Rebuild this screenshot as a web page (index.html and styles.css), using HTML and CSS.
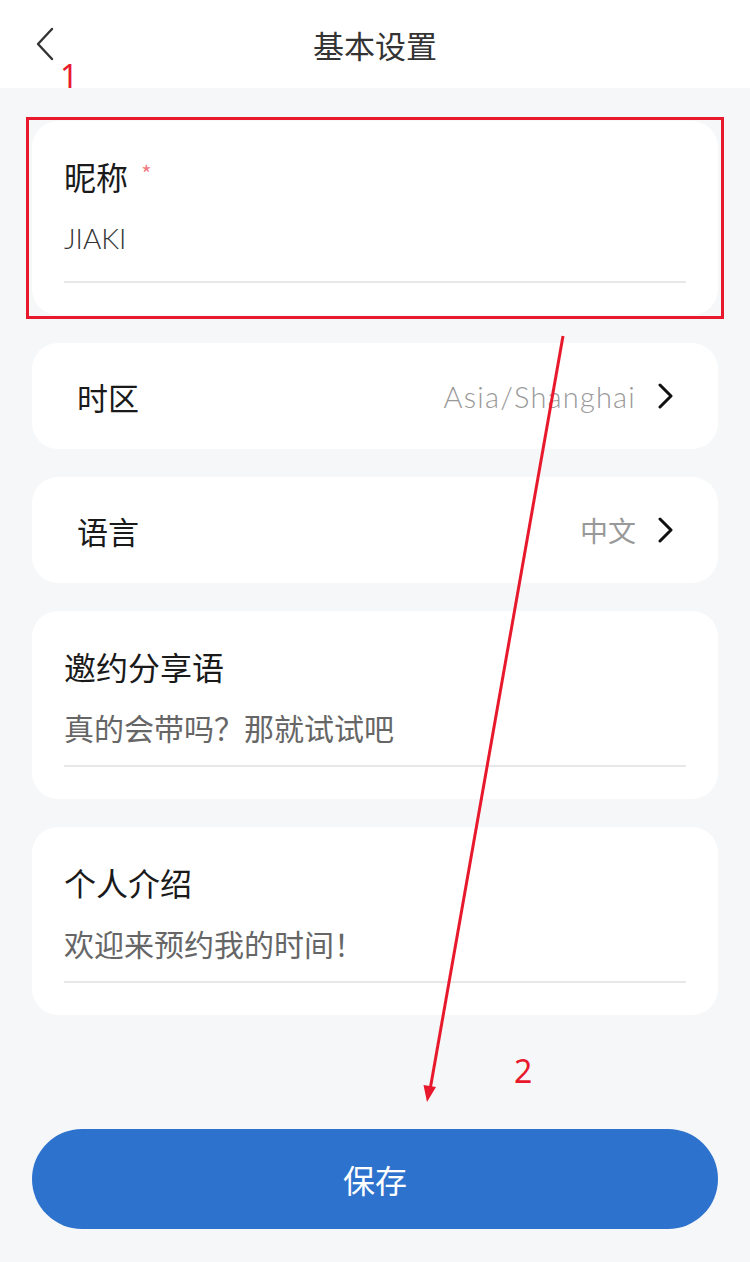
FILE: index.html
```html
<!DOCTYPE html>
<html lang="zh-CN">
<head>
  <meta charset="UTF-8">
  <meta name="viewport" content="width=device-width, initial-scale=1.0">
  <title>基本设置</title>
  <link rel="stylesheet" href="styles.css">
</head>
<body>

  <!-- Header -->
  <header class="header">
    <button class="back-button" aria-label="返回">
      <svg width="20" height="34" viewBox="0 0 20 34">
        <path d="M17 2 L3 17 L17 32" fill="none" stroke="#333" stroke-width="2.4" stroke-linecap="round" stroke-linejoin="round"/>
      </svg>
    </button>
    <h1 class="title">基本设置</h1>
  </header>

  <main class="settings">
    <!-- Nickname -->
    <div class="card field field-nickname">
      <div class="field-label">昵称 <span class="required">*</span></div>
      <div class="field-value dark">JIAKI</div>
    </div>

    <!-- Time zone -->
    <div class="card row">
      <div class="row-label">时区</div>
      <div class="row-right">
        <span class="row-value latin">Asia/Shanghai</span>
        <svg class="chevron" width="16" height="26" viewBox="0 0 16 26">
          <path d="M2 2 L13 13 L2 24" fill="none" stroke="#111" stroke-width="3" stroke-linecap="round" stroke-linejoin="round"/>
        </svg>
      </div>
    </div>

    <!-- Language -->
    <div class="card row">
      <div class="row-label">语言</div>
      <div class="row-right">
        <span class="row-value">中文</span>
        <svg class="chevron" width="16" height="26" viewBox="0 0 16 26">
          <path d="M2 2 L13 13 L2 24" fill="none" stroke="#111" stroke-width="3" stroke-linecap="round" stroke-linejoin="round"/>
        </svg>
      </div>
    </div>

    <!-- Invite text -->
    <div class="card field">
      <div class="field-label">邀约分享语</div>
      <div class="field-value">真的会带吗？那就试试吧</div>
    </div>

    <!-- Intro -->
    <div class="card field">
      <div class="field-label">个人介绍</div>
      <div class="field-value">欢迎来预约我的时间！</div>
    </div>

    <button class="save-button">保存</button>
  </main>

  <!-- Review annotations drawn over the page -->
  <svg class="annotations" width="750" height="1262" viewBox="0 0 750 1262">
    <rect x="27.5" y="118.5" width="695" height="199" fill="none" stroke="#e8192c" stroke-width="3"/>
    <text x="60" y="88" class="mark">1</text>
    <text x="514" y="1083" class="mark">2</text>
    <line x1="563" y1="336" x2="430" y2="1090" stroke="#e8192c" stroke-width="3"/>
    <polygon points="427,1102 436,1087 423.5,1085" fill="#e8192c"/>
  </svg>

</body>
</html>
```

FILE: styles.css
```css
body {
  margin: 0;
  font-family: "Noto Sans CJK SC", "Noto Sans", sans-serif;
  background-color: #f6f7f9;
  color: #222;
  position: relative;
  min-height: 1262px;
}

.header {
  height: 88px;
  background-color: #fff;
  display: flex;
  align-items: center;
  justify-content: center;
  position: relative;
}

.back-button {
  position: absolute;
  left: 35px;
  top: 27px;
  padding: 0;
  border: none;
  background: none;
  display: flex;
}

.title {
  margin: 0;
  font-size: 31px;
  font-weight: 400;
  color: #333;
  line-height: 1;
}

.settings {
  display: flex;
  flex-direction: column;
  padding: 33px 32px 0;
  gap: 28px;
}

.card {
  background-color: #fff;
  border-radius: 26px;
}

/* Stacked label + input fields */
.field {
  padding: 36px 32px 32px;
}

.field-label {
  font-size: 32px;
  line-height: 38px;
  color: #1a1a1a;
}

.required {
  color: #f07a80;
  font-size: 22px;
  vertical-align: top;
  margin-left: 6px;
  line-height: 30px;
}

.field-value {
  margin-top: 22px;
  padding-bottom: 18px;
  border-bottom: 2px solid #e8e8e8;
  font-size: 30px;
  line-height: 40px;
  color: #666;
}

.field-nickname .field-value {
  margin-top: 23px;
  padding-bottom: 23px;
}

.field-value.dark {
  font-family: Lato, "Noto Sans", sans-serif;
  font-weight: 300;
  font-size: 28px;
  color: #333;
}

/* Single line rows with chevron */
.row {
  height: 106px;
  display: flex;
  align-items: center;
  justify-content: space-between;
  padding: 0 44px 0 45px;
}

.row-label {
  font-size: 31px;
  color: #1a1a1a;
}

.row-right {
  display: flex;
  align-items: center;
  gap: 22px;
}

.row-value {
  font-size: 28px;
  color: #999;
}

.row-value.latin {
  font-family: Lato, "Noto Sans", sans-serif;
  font-weight: 300;
  font-size: 29px;
  letter-spacing: 1.2px;
}

.chevron {
  display: block;
}

.save-button {
  margin-top: 86px;
  height: 100px;
  border: none;
  border-radius: 50px;
  background-color: #2d72cc;
  color: #fff;
  font-family: "Noto Sans CJK SC", sans-serif;
  font-size: 32px;
}

.annotations {
  position: absolute;
  left: 0;
  top: 0;
  pointer-events: none;
}

.mark {
  font-family: "Noto Sans", sans-serif;
  font-size: 32px;
  fill: #e8192c;
}
```
